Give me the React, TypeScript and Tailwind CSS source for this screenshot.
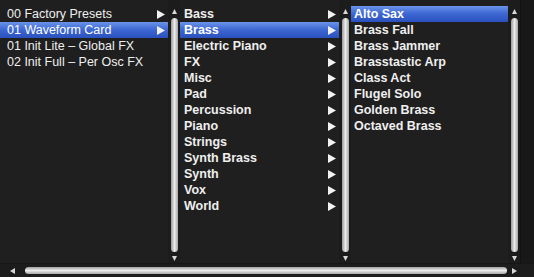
import React from "react";

type Col = {
  items: string[];
  selected: number;
  arrows: boolean;
  bold: boolean;
  width: string;
  padLeft: string;
};

const columns: Col[] = [
  {
    items: ["00 Factory Presets", "01 Waveform Card", "01 Init Lite – Global FX", "02 Init Full – Per Osc FX"],
    selected: 1,
    arrows: false,
    bold: false,
    width: "w-[168px]",
    padLeft: "pl-[7px]",
  },
  {
    items: [
      "Bass",
      "Brass",
      "Electric Piano",
      "FX",
      "Misc",
      "Pad",
      "Percussion",
      "Piano",
      "Strings",
      "Synth Brass",
      "Synth",
      "Vox",
      "World",
    ],
    selected: 1,
    arrows: true,
    bold: true,
    width: "w-[159px]",
    padLeft: "pl-[4px]",
  },
  {
    items: ["Alto Sax", "Brass Fall", "Brass Jammer", "Brasstastic Arp", "Class Act", "Flugel Solo", "Golden Brass", "Octaved Brass"],
    selected: 0,
    arrows: false,
    bold: true,
    width: "w-[157px]",
    padLeft: "pl-[3px]",
  },
];

function Tri({ dir, className }: { dir: "up" | "down" | "left" | "right"; className?: string }) {
  const pts = {
    up: "0,5 2.5,0 5,5",
    down: "0,0 5,0 2.5,5",
    left: "5,0 5,6 0,3",
    right: "0,0 0,6 5,3",
  }[dir];
  const w = dir === "up" || dir === "down" ? 5 : 5;
  const h = dir === "up" || dir === "down" ? 5 : 6;
  return (
    <svg width={w} height={h} viewBox={`0 0 ${w} ${h}`} className={className}>
      <polygon points={pts} fill="#d8d8d8" />
    </svg>
  );
}

function Arrow() {
  return (
    <svg width="8" height="9" viewBox="0 0 8 9" className="shrink-0">
      <polygon points="0,0 0,9 8,4.5" fill="#f2f2f2" />
    </svg>
  );
}

function VScroll() {
  return (
    <div className="w-[12px] shrink-0 flex flex-col items-center pt-[9px] pb-[2px] bg-[#1c1c1c]">
      <Tri dir="up" />
      <div className="mt-[4px] w-[7px] flex-1 rounded-full bg-gradient-to-r from-[#9a9a9a] via-[#ececec] to-[#a4a4a4]" />
      <Tri dir="down" className="mt-[4px]" />
    </div>
  );
}

export default function App() {
  return (
    <div
      className="w-[534px] h-[277px] bg-[#1f1f1f] flex flex-col overflow-hidden text-[12.5px] leading-[16px] text-[#efefef]"
      style={{ fontFamily: '"Liberation Sans", Arial, sans-serif' }}
    >
      {/* Browser columns */}
      <div className="flex h-[264px] border-b border-[#161616]">
        {columns.map((col, ci) => (
          <div key={ci} className="flex shrink-0">
            <div className={`${col.width} pt-[6px]`}>
              {col.items.map((item, i) => {
                const sel = i === col.selected;
                const showArrow = ci < 2;
                return (
                  <div
                    key={item}
                    className={`flex items-center justify-between h-[16px] pr-[3px] ${col.padLeft} ${
                      sel ? "bg-gradient-to-b from-[#6a93e8] via-[#3c66d2] to-[#2a51bd] text-white" : ""
                    }`}
                  >
                    <span className={`whitespace-nowrap ${col.bold ? "font-bold" : "font-normal"}`}>{item}</span>
                    {showArrow && (ci === 1 || i < 2) && <Arrow />}
                  </div>
                );
              })}
            </div>
            <VScroll />
          </div>
        ))}
        <div className="flex-1 bg-[#181818] border-l border-[#121212]" />
      </div>

      {/* Horizontal scrollbar */}
      <div className="flex-1 flex items-center pl-[10px] pr-[17px] bg-[#1c1c1c]">
        <Tri dir="left" />
        <div className="ml-[10px] h-[7px] flex-1 rounded-full bg-gradient-to-b from-[#a0a0a0] via-[#ececec] to-[#a8a8a8]" />
        <Tri dir="right" className="ml-[5px]" />
      </div>
    </div>
  );
}
